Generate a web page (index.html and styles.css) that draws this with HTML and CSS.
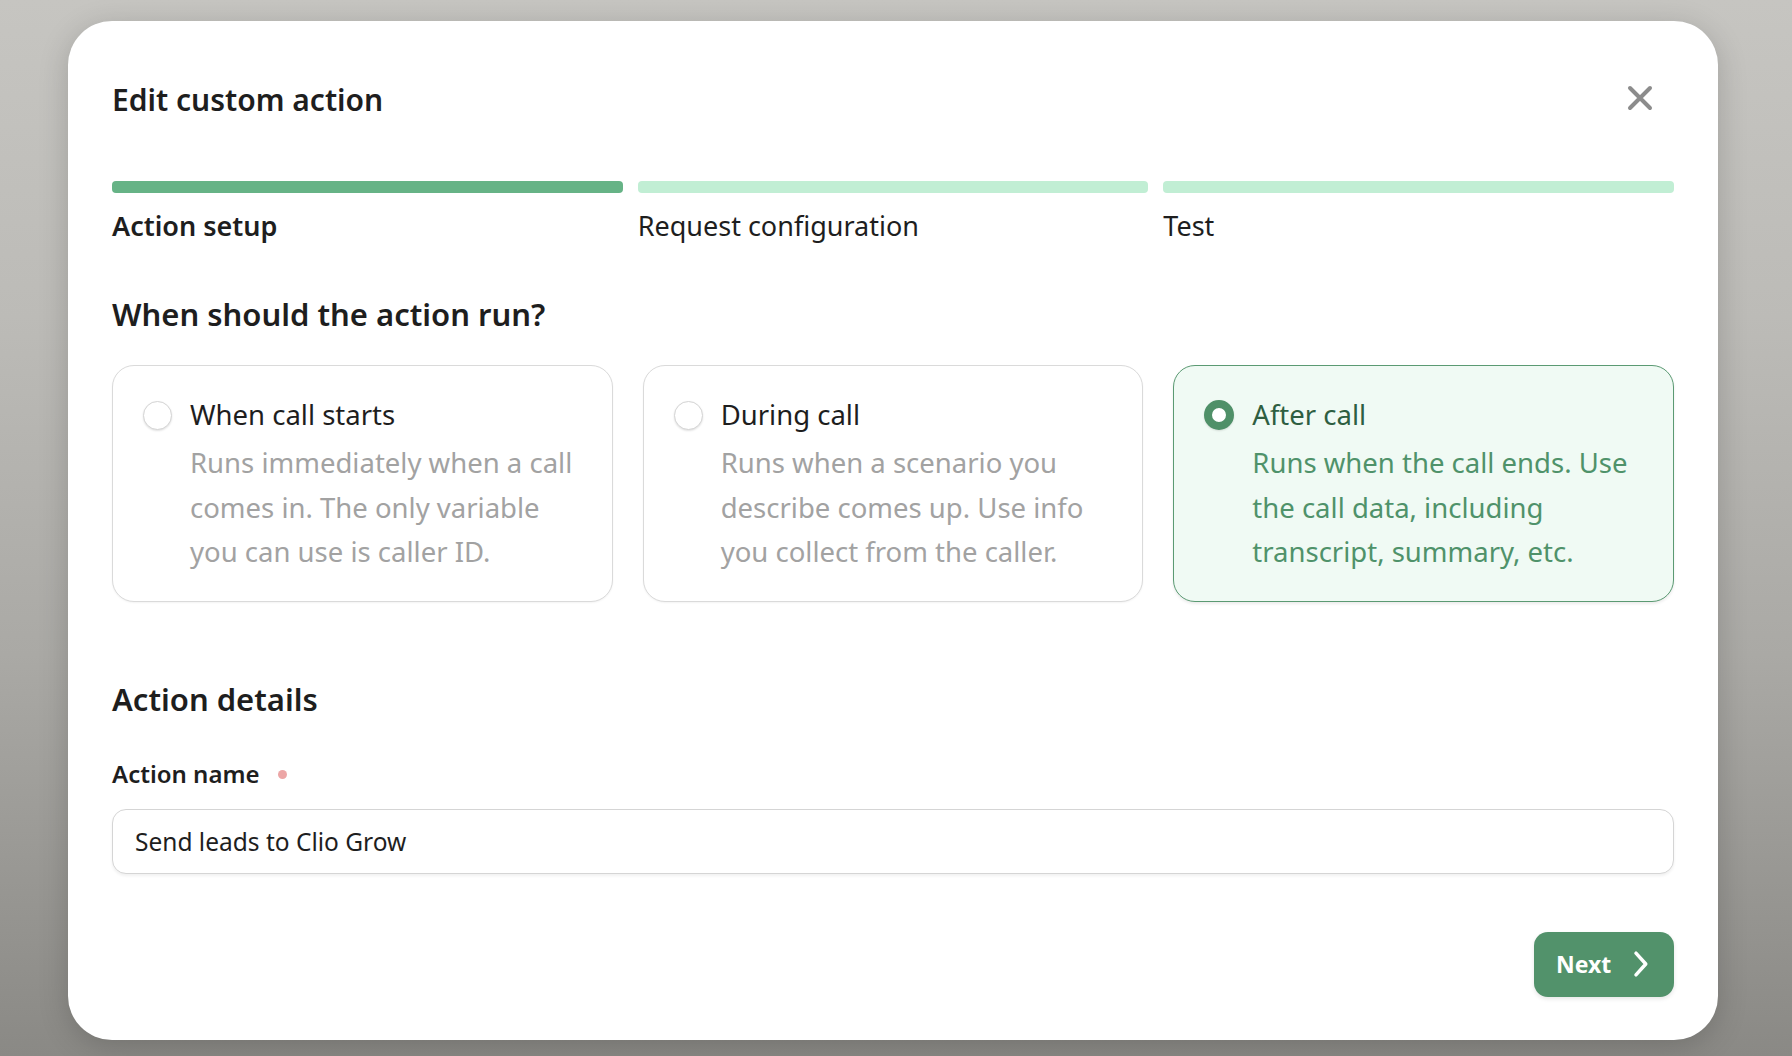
FILE: index.html
```html
<!DOCTYPE html>
<html lang="en">
<head>
  <meta charset="UTF-8">
  <meta name="viewport" content="width=device-width, initial-scale=1.0">
  <title>Edit custom action</title>
  <link rel="stylesheet" href="styles.css">
</head>
<body>
  <div class="modal">
    <div class="modal-header">
      <h1>Edit custom action</h1>
      <button class="close-btn" aria-label="Close">
        <svg width="26" height="26" viewBox="0 0 26 26"><path d="M3 3L23 23M23 3L3 23"/></svg>
      </button>
    </div>

    <!-- wizard steps -->
    <div class="steps">
      <div class="step active"><div class="bar"></div><span>Action setup</span></div>
      <div class="step"><div class="bar"></div><span>Request configuration</span></div>
      <div class="step"><div class="bar"></div><span>Test</span></div>
    </div>

    <h2 class="section-title">When should the action run?</h2>
    <div class="options">
      <div class="option">
        <span class="radio"></span>
        <div class="option-text">
          <span class="option-title">When call starts</span>
          <span class="option-desc">Runs immediately when a call comes in. The only variable you can use is caller ID.</span>
        </div>
      </div>
      <div class="option">
        <span class="radio"></span>
        <div class="option-text">
          <span class="option-title">During call</span>
          <span class="option-desc">Runs when a scenario you describe comes up. Use info you collect from the caller.</span>
        </div>
      </div>
      <div class="option selected">
        <span class="radio"></span>
        <div class="option-text">
          <span class="option-title">After call</span>
          <span class="option-desc">Runs when the call ends. Use the call data, including transcript, summary, etc.</span>
        </div>
      </div>
    </div>

    <h2 class="section-title details-title">Action details</h2>
    <div class="field-label">Action name <span class="required-dot"></span></div>
    <input type="text" class="text-input" value="Send leads to Clio Grow">

    <div class="modal-footer">
      <button class="next-btn">
        Next
        <svg width="16" height="28" viewBox="0 0 16 28"><path d="M3 3L13 14L3 25"/></svg>
      </button>
    </div>
  </div>
</body>
</html>
```

FILE: styles.css
```css
* {
  box-sizing: border-box;
}

body {
  margin: 0;
  min-height: 100vh;
  padding: 21px 0 0 68px;
  font-family: "Noto Sans", sans-serif;
  color: #1e1e1e;
  background: linear-gradient(180deg, #c6c5c1 0%, #bcbbb7 30%, #aaa9a5 62%, #8a8985 100%);
  overflow: hidden;
}

/* Modal box */
.modal {
  width: 1650px;
  background: #fff;
  border-radius: 44px;
  padding: 56px 44px 43px;
  box-shadow: 0 6px 30px rgba(0, 0, 0, 0.18);
}

.modal-header {
  display: flex;
  align-items: center;
  justify-content: space-between;
  height: 46px;
}

.modal-header h1 {
  margin: 0;
  font-size: 30px;
  font-weight: 600;
  line-height: 46px;
}

.close-btn {
  display: flex;
  width: 26px;
  height: 26px;
  margin: 0 21px 4px 0;
  padding: 0;
  border: none;
  background: none;
  cursor: pointer;
}

.close-btn path {
  fill: none;
  stroke: #8c8c8c;
  stroke-width: 4;
  stroke-linecap: round;
}

/* Steps */
.steps {
  display: grid;
  grid-template-columns: repeat(3, 1fr);
  gap: 15px;
  margin-top: 58px;
}

.bar {
  height: 12px;
  border-radius: 4px;
  background: #c1eed4;
}

.step.active .bar {
  background: #66b386;
}

.step span {
  display: block;
  margin-top: 15px;
  font-size: 27px;
  line-height: 36px;
}

.step.active span {
  font-weight: 600;
}

.section-title {
  margin: 49px 0 0;
  font-size: 31px;
  font-weight: 600;
  line-height: 42px;
}

/* Option cards */
.options {
  display: grid;
  grid-template-columns: repeat(3, 1fr);
  gap: 30px;
  margin-top: 30px;
}

.option {
  display: flex;
  align-items: flex-start;
  gap: 18px;
  padding: 27px 24px 26px 30px;
  border: 1.5px solid #dadada;
  border-radius: 22px;
  background: #fff;
  box-shadow: 0 1px 2px rgba(0, 0, 0, 0.05);
}

.radio {
  flex-shrink: 0;
  width: 29px;
  height: 29px;
  margin-top: 7.5px;
  border: 1.5px solid #d4d4d4;
  border-radius: 50%;
  background: #fff;
  box-shadow: 0 1px 2px rgba(0, 0, 0, 0.12);
}

.option-title {
  display: block;
  font-size: 27.5px;
  line-height: 44px;
}

.option-desc {
  display: block;
  margin-top: 4px;
  font-size: 27.5px;
  line-height: 44.5px;
  color: #a2a2a2;
}

.option.selected {
  border-color: #5b9a73;
  background: #f0faf4;
  box-shadow: 0 2px 3px rgba(0, 0, 0, 0.08);
}

.option.selected .radio {
  width: 30px;
  height: 30px;
  margin-top: 7px;
  border: 8.5px solid #4f9068;
}

.option.selected .option-title {
  color: #2e5e41;
}

.option.selected .option-desc {
  color: #4f926a;
}

/* Details form */
.details-title {
  margin-top: 76px;
}

.field-label {
  margin-top: 37px;
  font-size: 24px;
  font-weight: 600;
  line-height: 34px;
}

.required-dot {
  display: inline-block;
  width: 9px;
  height: 9px;
  margin-left: 12px;
  border-radius: 50%;
  background: #eca6a6;
  vertical-align: 4px;
}

.text-input {
  display: block;
  width: 100%;
  height: 65px;
  margin-top: 18px;
  padding: 0 22px;
  border: 1.5px solid #d5d5d5;
  border-radius: 14px;
  font-family: "Noto Sans", sans-serif;
  font-size: 24.5px;
  color: #1e1e1e;
  box-shadow: 0 2px 3px rgba(0, 0, 0, 0.06);
  outline: none;
}

.modal-footer {
  display: flex;
  justify-content: flex-end;
  margin-top: 58px;
}

.next-btn {
  display: flex;
  align-items: center;
  gap: 22px;
  width: 140px;
  height: 65px;
  padding: 0 25px 0 22px;
  border: none;
  border-radius: 14px;
  background: #52926b;
  color: #fff;
  font-family: "Noto Sans", sans-serif;
  font-size: 23px;
  font-weight: 700;
  box-shadow: 0 2px 4px rgba(0, 0, 0, 0.1);
  cursor: pointer;
}

.next-btn path {
  fill: none;
  stroke: #fff;
  stroke-width: 3.5;
  stroke-linecap: round;
  stroke-linejoin: round;
}
```
